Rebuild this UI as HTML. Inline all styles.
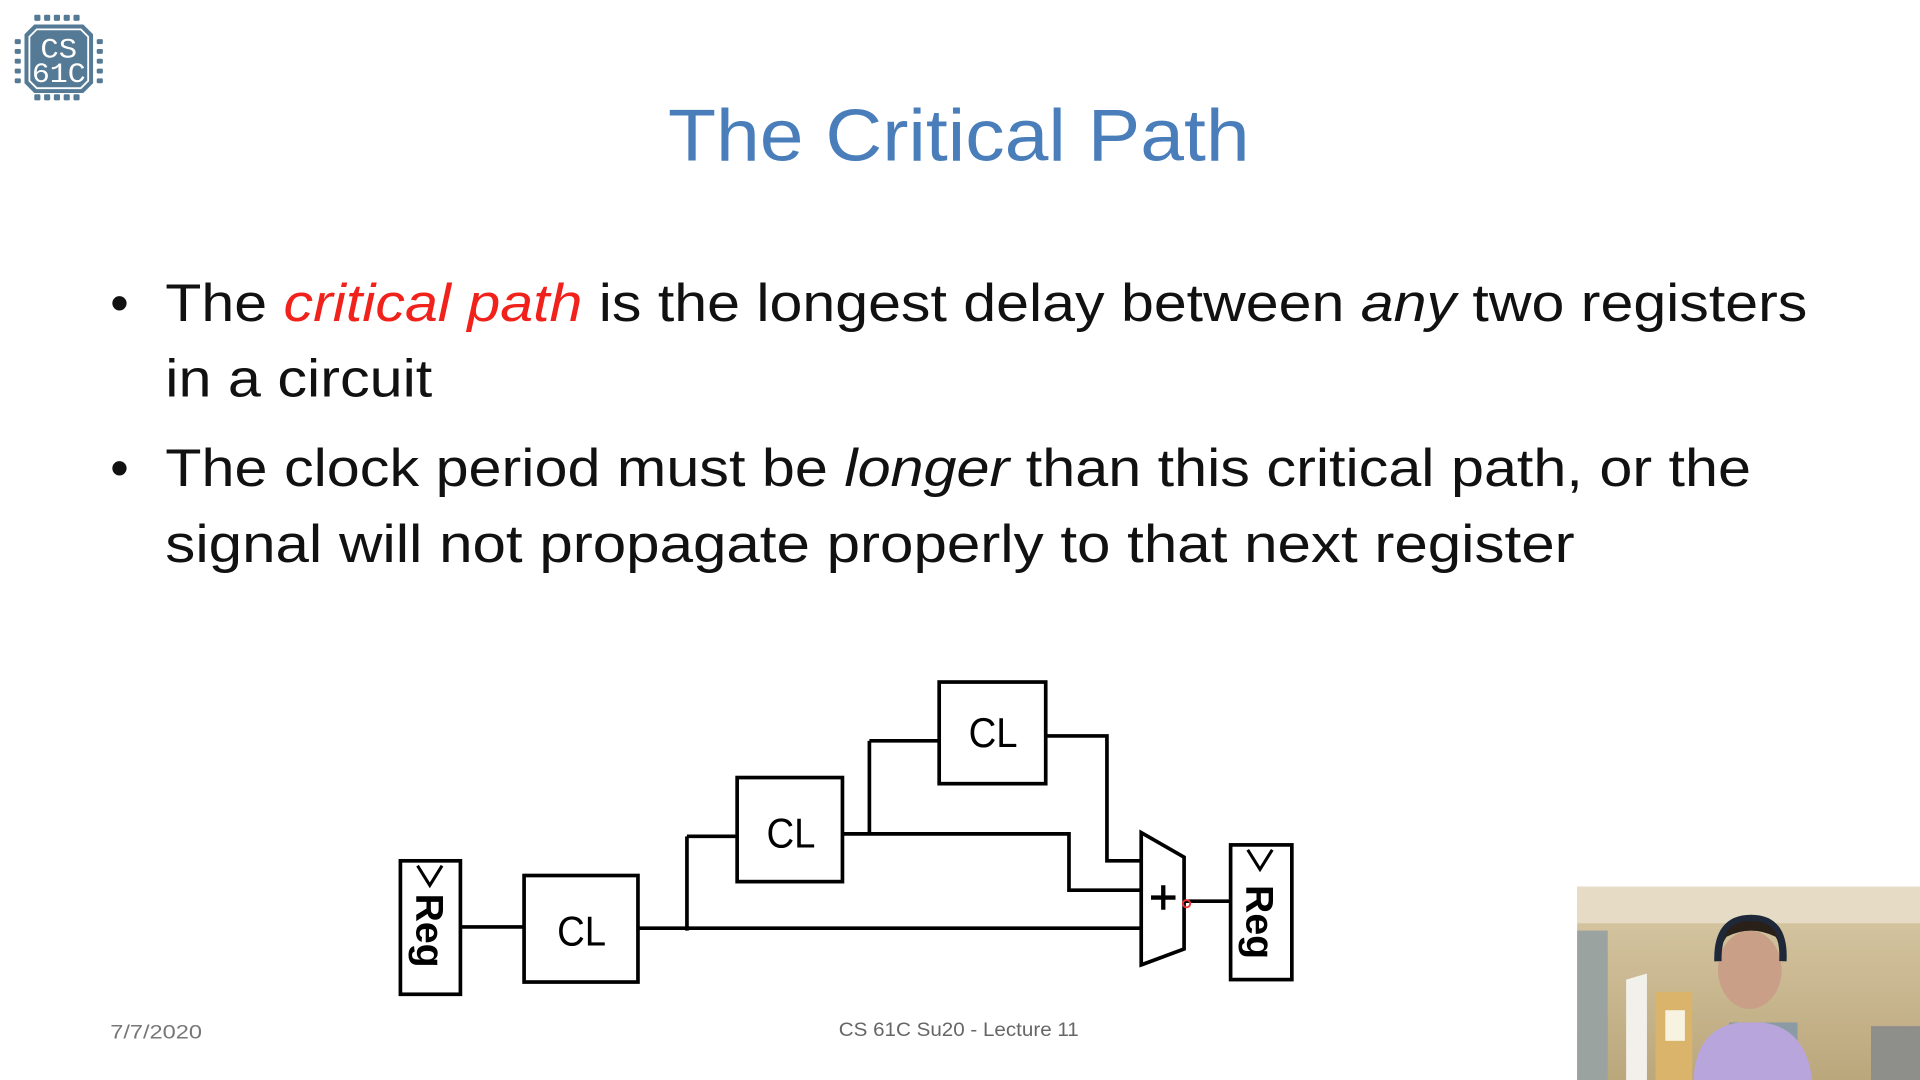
<!DOCTYPE html>
<html><head><meta charset="utf-8"><style>
html,body{margin:0;padding:0;background:#fff;width:1920px;height:1080px;overflow:hidden}
svg{display:block}
</style></head><body>
<svg width="1920" height="1080" viewBox="0 0 1568 882" xmlns="http://www.w3.org/2000/svg">
<rect width="1568" height="882" fill="#fff"/>
<!-- logo -->
<g fill="#557a95">
  <rect x="28" y="12" width="5" height="5" rx="1"/><rect x="36" y="12" width="5" height="5" rx="1"/><rect x="44" y="12" width="5" height="5" rx="1"/><rect x="52" y="12" width="5" height="5" rx="1"/><rect x="60" y="12" width="5" height="5" rx="1"/>
  <g transform="translate(0,65)"><rect x="28" y="12" width="5" height="5" rx="1"/><rect x="36" y="12" width="5" height="5" rx="1"/><rect x="44" y="12" width="5" height="5" rx="1"/><rect x="52" y="12" width="5" height="5" rx="1"/><rect x="60" y="12" width="5" height="5" rx="1"/></g>
  <rect x="12" y="32" width="5" height="4" rx="1"/><rect x="12" y="40" width="5" height="4" rx="1"/><rect x="12" y="48" width="5" height="4" rx="1"/><rect x="12" y="56" width="5" height="4" rx="1"/><rect x="12" y="64" width="5" height="4" rx="1"/>
  <rect x="79" y="32" width="5" height="4" rx="1"/><rect x="79" y="40" width="5" height="4" rx="1"/><rect x="79" y="48" width="5" height="4" rx="1"/><rect x="79" y="56" width="5" height="4" rx="1"/><rect x="79" y="64" width="5" height="4" rx="1"/>
  <polygon points="28,20 68,20 76,28 76,68 68,76 28,76 20,68 20,28"/>
</g>
<polygon points="30,24 66,24 72,30 72,66 66,72 30,72 24,66 24,30" fill="none" stroke="#fff" stroke-width="1.5"/>
<text x="48" y="47" font-family="Liberation Mono, monospace" font-size="23" fill="#fff" text-anchor="middle" textLength="30" lengthAdjust="spacingAndGlyphs">CS</text>
<text x="48" y="67" font-family="Liberation Mono, monospace" font-size="23" fill="#fff" text-anchor="middle" textLength="44" lengthAdjust="spacingAndGlyphs">61C</text>
<!-- title -->
<text x="783" y="131" font-family="Liberation Sans, sans-serif" font-size="60" fill="#4a7ebb" text-anchor="middle" textLength="475" lengthAdjust="spacingAndGlyphs">The Critical Path</text>
<!-- bullets -->
<g font-family="Liberation Sans, sans-serif" font-size="43" fill="#111">
<text x="90" y="262">•</text>
<text x="135" y="262" textLength="1341" lengthAdjust="spacingAndGlyphs">The <tspan fill="#f0221b" font-style="italic">critical path</tspan> is the longest delay between <tspan font-style="italic">any</tspan> two registers</text>
<text x="135" y="324" textLength="218" lengthAdjust="spacingAndGlyphs">in a circuit</text>
<text x="90" y="397">•</text>
<text x="135" y="397" textLength="1295" lengthAdjust="spacingAndGlyphs">The clock period must be <tspan font-style="italic">longer</tspan> than this critical path, or the</text>
<text x="135" y="459" textLength="1151" lengthAdjust="spacingAndGlyphs">signal will not propagate properly to that next register</text>
</g>
<!-- diagram -->
<g fill="none" stroke="#000" stroke-width="3">
<rect x="327" y="703" width="49" height="109"/>
<rect x="428" y="715" width="93" height="87"/>
<rect x="602" y="635" width="86" height="85"/>
<rect x="767" y="557" width="87" height="83"/>
<rect x="1005" y="690" width="50" height="110"/>
<polygon points="932,680 967,700 967,775 932,788"/>
<path d="M376,757H428 M521,758H932 M561,683V760 M561,683H602 M688,681H873V727H932 M710,605V681 M710,605H767 M854,601H904V703H932 M967,736H1005"/>
<path d="M341,707 L351,723 L361,707" stroke-width="2.5"/>
<path d="M1019,694 L1029,710 L1039,694" stroke-width="2.5"/>
<path d="M940,733H960 M950,723V743" stroke-width="3.5"/>
</g>
<circle cx="969" cy="738" r="3" fill="none" stroke="#e33" stroke-width="1.5"/>
<g font-family="Liberation Sans, sans-serif" font-size="34" fill="#000" text-anchor="middle">
<text x="475" y="772" textLength="40" lengthAdjust="spacingAndGlyphs">CL</text>
<text x="646" y="692" textLength="40" lengthAdjust="spacingAndGlyphs">CL</text>
<text x="811" y="610" textLength="40" lengthAdjust="spacingAndGlyphs">CL</text>
</g>
<text transform="translate(340,760) rotate(90)" font-family="Liberation Sans, sans-serif" font-weight="bold" font-size="32" text-anchor="middle">Reg</text>
<text transform="translate(1018,753) rotate(90)" font-family="Liberation Sans, sans-serif" font-weight="bold" font-size="32" text-anchor="middle">Reg</text>
<!-- footer -->
<text x="90" y="848" font-family="Liberation Sans, sans-serif" font-size="16" fill="#777" textLength="75" lengthAdjust="spacingAndGlyphs">7/7/2020</text>
<text x="783" y="846" font-family="Liberation Sans, sans-serif" font-size="16" fill="#666" text-anchor="middle" textLength="196" lengthAdjust="spacingAndGlyphs">CS 61C Su20 - Lecture 11</text>
<!-- webcam -->
<defs>
<linearGradient id="wall" x1="0" y1="0" x2="0" y2="1"><stop offset="0" stop-color="#d8c9a6"/><stop offset="1" stop-color="#bba77c"/></linearGradient>
</defs>
<rect x="1288" y="724" width="280" height="158" fill="url(#wall)"/>
<rect x="1288" y="724" width="280" height="30" fill="#e6dcc6"/>
<rect x="1288" y="760" width="25" height="122" fill="#9aa3a0"/>
<polygon points="1328,800 1345,795 1345,882 1328,882" fill="#f2f0ea"/>
<rect x="1352" y="810" width="30" height="72" fill="#d9b46a"/>
<rect x="1360" y="825" width="16" height="25" fill="#f7f3e0"/>
<rect x="1528" y="838" width="40" height="44" fill="#8e8e8a"/>
<rect x="1412" y="835" width="56" height="40" fill="#8b9ba6"/>
<ellipse cx="1429" cy="792" rx="26" ry="32" fill="#c99f88"/>
<path d="M1403,785 Q1402,750 1430,750 Q1458,750 1456,785" fill="none" stroke="#1e2838" stroke-width="6"/>
<path d="M1407,770 Q1410,752 1430,752 Q1450,752 1453,770 L1450,765 Q1430,755 1410,765Z" fill="#2a201a"/>
<path d="M1383,882 Q1385,840 1420,835 L1440,835 Q1475,840 1480,882Z" fill="#b7a5db"/>
</svg>
</body></html>
